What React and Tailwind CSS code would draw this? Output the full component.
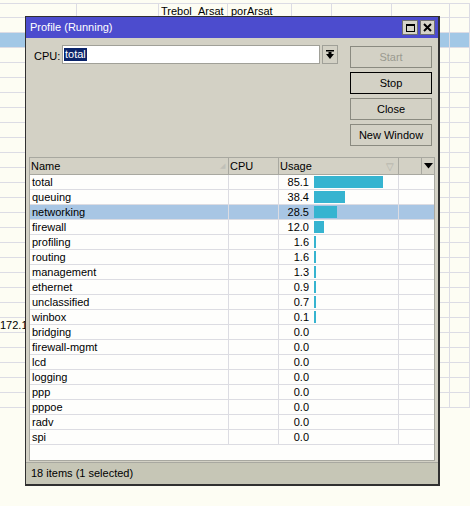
import React from 'react';

const bgCols = [77, 82, 69, 64, 40, 60, 58, 20];

const rows = [
  ['total', 85.1],
  ['queuing', 38.4],
  ['networking', 28.5],
  ['firewall', 12.0],
  ['profiling', 1.6],
  ['routing', 1.6],
  ['management', 1.3],
  ['ethernet', 0.9],
  ['unclassified', 0.7],
  ['winbox', 0.1],
  ['bridging', 0.0],
  ['firewall-mgmt', 0.0],
  ['lcd', 0.0],
  ['logging', 0.0],
  ['ppp', 0.0],
  ['pppoe', 0.0],
  ['radv', 0.0],
  ['spi', 0.0],
];

const font = { fontFamily: '"Liberation Sans", Arial, sans-serif' };

const Background = () => (
  <div className="pt-[3px]">
    {Array.from({ length: 27 }).map((_, i) => (
      <div
        key={i}
        className={`flex h-[15px] border-b border-[#dcdce4] ${i === 0 ? 'border-t' : ''} ${i === 2 ? 'bg-[#a2c8e6]' : ''}`}
      >
        {bgCols.map((w, j) => (
          <div
            key={j}
            className="border-r border-[#dcdce4] text-[11px] leading-[14px] text-black whitespace-nowrap overflow-hidden"
            style={{ width: w }}
          >
            {i === 0 && j === 2 && <span className="pl-[2px]">Trebol_Arsat</span>}
            {i === 0 && j === 3 && <span className="pl-[3px]">porArsat</span>}
            {i === 21 && j === 0 && <span>172.1</span>}
          </div>
        ))}
      </div>
    ))}
  </div>
);

const Btn = ({ children, disabled, active }) => (
  <div
    className={`h-[22px] w-[82px] flex items-center justify-center text-[11px] ${
      active ? 'border border-black' : 'border border-[#8a8a80]'
    } ${disabled ? 'text-[#9a9a90]' : 'text-black'}`}
  >
    {children}
  </div>
);

export default function App() {
  return (
    <div className="relative w-[470px] h-[506px] bg-[#fdfdf3] overflow-hidden" style={font}>
      <Background />

      {/* window */}
      <div className="absolute left-[25px] top-[16px] w-[415px] h-[470px] flex flex-col border border-[#303030] border-r-[2px] border-b-[2px] bg-[#d3d1c5]">
        {/* title bar */}
        <div className="h-[21px] bg-[#4c4cce] flex items-center pl-[4px] pr-[3px]">
          <span className="text-white text-[11px] flex-1">Profile (Running)</span>
          <div className="w-[16px] h-[15px] bg-[#d6d4c8] border border-[#707070] flex items-center justify-center mr-[2px]">
            <div className="w-[9px] h-[8px] border border-black border-t-2" />
          </div>
          <div className="w-[15px] h-[15px] bg-[#d6d4c8] border border-[#707070] flex items-center justify-center">
            <svg width="9" height="9" viewBox="0 0 9 9">
              <path d="M1 1 L8 8 M8 1 L1 8" stroke="black" strokeWidth="2" />
            </svg>
          </div>
        </div>

        {/* top panel */}
        <div className="flex h-[119px] pt-[7px] pl-[8px] pr-[6px]">
          <div className="flex items-start flex-1">
            <span className="text-[11px] mt-[3px] w-[28px]">CPU:</span>
            <div className="h-[19px] w-[258px] bg-white border border-[#a0a098] flex items-center pl-[1px]">
              <span className="bg-[#0a246a] text-white text-[11px] leading-[13px] px-[1px]">total</span>
            </div>
            <div className="ml-[2px] h-[19px] w-[16px] border border-[#a0a098] flex items-center justify-center">
              <svg width="8" height="9" viewBox="0 0 8 9">
                <rect x="0" y="0" width="8" height="1.5" fill="black" />
                <path d="M2.5 2 H5.5 V4 H8 L4 9 L0 4 H2.5 Z" fill="black" />
              </svg>
            </div>
          </div>
          <div className="flex flex-col gap-[4px] pt-[1px]">
            <Btn disabled>Start</Btn>
            <Btn active>Stop</Btn>
            <Btn>Close</Btn>
            <Btn>New Window</Btn>
          </div>
        </div>

        {/* table */}
        <div className="mx-[3px] flex-1 bg-[#fefefc] border border-[#a8a8a0] flex flex-col">
          <div className="flex h-[17px] bg-[#d3d1c5] border-b border-[#a8a8a0] text-[11px] items-center">
            <div className="w-[199px] h-full border-r border-[#a8a8a0] pl-[1px] flex items-center justify-between pr-[3px]">
              <span>Name</span>
              <span className="text-[7px] text-[#c0c0b8]">◢</span>
            </div>
            <div className="w-[50px] h-full border-r border-[#a8a8a0] pl-[1px] flex items-center">CPU</div>
            <div className="w-[120px] h-full border-r border-[#a8a8a0] pl-[1px] flex items-center justify-between pr-[4px]">
              <span>Usage</span>
              <span className="text-[10px] text-[#b0b0a8]">▽</span>
            </div>
            <div className="w-[23px] h-full border-r border-[#a8a8a0]" />
            <div className="flex-1 flex items-center justify-center">
              <svg width="9" height="6" viewBox="0 0 9 6">
                <path d="M0 0 H9 L4.5 5.5 Z" fill="black" />
              </svg>
            </div>
          </div>

          {rows.map(([name, v]) => {
            const sel = name === 'networking';
            const w = v > 0 ? Math.max(2, Math.round(v * 0.81)) : 0;
            return (
              <div
                key={name}
                className={`flex h-[15px] border-b border-[#dcdce2] text-[11px] leading-[14px] ${sel ? 'bg-[#a8c6e4]' : ''}`}
              >
                <div className="w-[199px] border-r border-[#dcdce2] pl-[2px]">{name}</div>
                <div className="w-[50px] border-r border-[#dcdce2]" />
                <div className="w-[120px] border-r border-[#dcdce2] flex items-center">
                  <span className="w-[30px] text-right">{v.toFixed(1)}</span>
                  {w > 0 && <div className="ml-[5px] h-[12px] bg-[#36b4d0]" style={{ width: w }} />}
                </div>
              </div>
            );
          })}
        </div>

        {/* status bar */}
        <div className="h-[22px] mt-[1px] bg-[#c6c6b6] border-t border-[#a8a8a0] flex items-center pl-[5px] text-[11px]">
          18 items (1 selected)
        </div>
      </div>
    </div>
  );
}
